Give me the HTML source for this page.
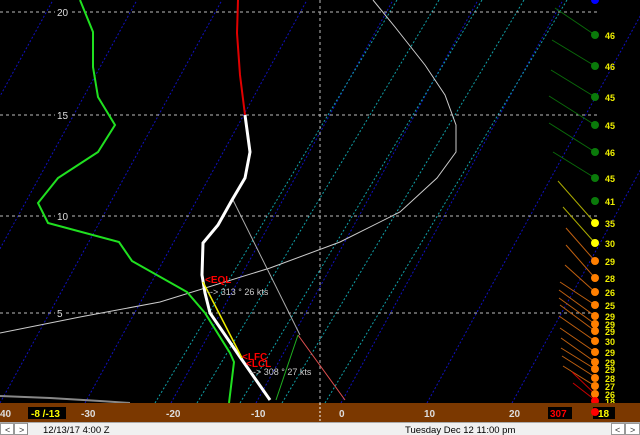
<!DOCTYPE html>
<html><head><style>
html,body{margin:0;padding:0;background:#000;width:640px;height:435px;overflow:hidden;font-family:"Liberation Sans",sans-serif}
</style></head><body>
<svg width="640" height="435" xmlns="http://www.w3.org/2000/svg" style="position:absolute;left:0;top:0">
<rect width="640" height="435" fill="#000"/>
<g stroke="#1010c0" stroke-width="1" stroke-dasharray="2,2" fill="none">
<line x1="-169" y1="403" x2="53" y2="0"/>
<line x1="-85" y1="403" x2="137" y2="0"/>
<line x1="0" y1="403" x2="222" y2="0"/>
<line x1="85" y1="403" x2="307" y2="0"/>
<line x1="171" y1="403" x2="393" y2="0"/>
<line x1="256" y1="403" x2="478" y2="0"/>
<line x1="341" y1="403" x2="563" y2="0"/>
<line x1="427" y1="403" x2="649" y2="0"/>
<line x1="512" y1="403" x2="734" y2="0"/>
</g>
<g stroke="#10a0a8" stroke-width="1" stroke-dasharray="2,2" fill="none">
<line x1="155" y1="403" x2="397" y2="0"/>
<line x1="197" y1="403" x2="439" y2="0"/>
<line x1="240" y1="403" x2="482" y2="0"/>
<line x1="282" y1="403" x2="524" y2="0"/>
<line x1="325" y1="403" x2="567" y2="0"/>
</g>
<g stroke="#bbb" stroke-width="1" stroke-dasharray="3,3">
<line x1="0" y1="12" x2="600" y2="12"/>
<line x1="0" y1="115" x2="600" y2="115"/>
<line x1="0" y1="216" x2="600" y2="216"/>
<line x1="0" y1="313" x2="600" y2="313"/>
<line x1="320" y1="0" x2="320" y2="403"/>
</g>
<g fill="#ddd" font-size="10">
<rect x="55" y="6" width="14" height="12" fill="#000"/><text x="57" y="16">20</text>
<rect x="55" y="109" width="14" height="12" fill="#000"/><text x="57" y="119">15</text>
<rect x="55" y="210" width="14" height="12" fill="#000"/><text x="57" y="220">10</text>
<rect x="55" y="307" width="10" height="12" fill="#000"/><text x="57" y="317">5</text>
</g>
<polyline fill="none" stroke="#ccc" stroke-width="1" points="0,333 80,317 160,302 270,268 340,242 400,212 437,178 456,152 456,125 445,95 425,65 395,27 373,0"/>
<polyline fill="none" stroke="#aaa" stroke-width="1" points="233,200 300,335"/>
<polyline fill="none" stroke="#e05050" stroke-width="1" points="298,335 345,400"/>
<polyline fill="none" stroke="#20b020" stroke-width="1" points="298,335 276,400"/>
<polyline fill="none" stroke="#888" stroke-width="2" points="0,396 50,398 100,401 130,403"/>
<polyline fill="none" stroke="#20e020" stroke-width="2" points="80,0 93,32 93,67 98,97 115,125 98,152 58,178 38,203 48,223 119,242 132,261 187,292 205,313 230,353 234,362 229,403"/>
<polyline fill="none" stroke="#e00000" stroke-width="2" points="238,0 237,33 240,75 245,115"/>
<polyline fill="none" stroke="#fff" stroke-width="3" points="245,115 250,152 245,178 232,200 218,225 203,243 202,275 205,293 210,313 240,357 270,400"/>
<polyline fill="none" stroke="#ee0" stroke-width="1.5" points="203,282 242,358"/>
<g fill="#f00" font-size="10" font-weight="bold">
<text x="205" y="283">&lt;EQL</text>
<text x="242" y="360">&lt;LFC</text>
<text x="246" y="367">&lt;LCL</text>
</g>
<g fill="#ccc" font-size="9">
<text x="207" y="295">--&gt;  313 ° 26 kts</text>
<text x="250" y="375">--&gt;  308 ° 27 kts</text>
</g>
<g stroke-width="1" fill="none">
<line x1="555" y1="8" x2="595" y2="35" stroke="#0a6a0a"/>
<line x1="552" y1="40" x2="595" y2="66" stroke="#0a6a0a"/>
<line x1="551" y1="70" x2="595" y2="97" stroke="#0a6a0a"/>
<line x1="549" y1="96" x2="595" y2="125" stroke="#0a6a0a"/>
<line x1="549" y1="123" x2="595" y2="152" stroke="#0a6a0a"/>
<line x1="553" y1="152" x2="595" y2="178" stroke="#0a6a0a"/>
<line x1="558" y1="181" x2="595" y2="223" stroke="#aaaa00"/>
<line x1="563" y1="207" x2="595" y2="243" stroke="#aaaa00"/>
<g stroke="#c06010">
<line x1="566" y1="228" x2="595" y2="261"/>
<line x1="566" y1="245" x2="595" y2="278"/>
<line x1="565" y1="265" x2="595" y2="292"/>
<line x1="560" y1="282" x2="595" y2="305"/>
<line x1="559" y1="290" x2="595" y2="316"/>
<line x1="559" y1="298" x2="595" y2="324"/>
<line x1="560" y1="305" x2="595" y2="331"/>
<line x1="559" y1="316" x2="595" y2="341"/>
<line x1="560" y1="328" x2="595" y2="352"/>
<line x1="561" y1="338" x2="595" y2="362"/>
<line x1="561" y1="348" x2="595" y2="369"/>
<line x1="562" y1="356" x2="595" y2="377"/>
<line x1="563" y1="366" x2="595" y2="386"/>
</g>
<line x1="572" y1="372" x2="595" y2="394" stroke="#c00"/>
<line x1="573" y1="383" x2="595" y2="400" stroke="#c00"/>
</g>
<circle cx="595" cy="0" r="4" fill="#00f"/>
<g fill="#0a7a0a"><circle cx="595" cy="35" r="4"/><circle cx="595" cy="66" r="4"/><circle cx="595" cy="97" r="4"/><circle cx="595" cy="125" r="4"/><circle cx="595" cy="152" r="4"/><circle cx="595" cy="178" r="4"/><circle cx="595" cy="201" r="4"/></g>
<g fill="#ff0"><circle cx="595" cy="223" r="4"/><circle cx="595" cy="243" r="4"/></g>
<g fill="#ff7f00"><circle cx="595" cy="261" r="4"/><circle cx="595" cy="278" r="4"/><circle cx="595" cy="292" r="4"/><circle cx="595" cy="305" r="4"/><circle cx="595" cy="316" r="4"/><circle cx="595" cy="324" r="4"/><circle cx="595" cy="331" r="4"/><circle cx="595" cy="341" r="4"/><circle cx="595" cy="352" r="4"/><circle cx="595" cy="362" r="4"/><circle cx="595" cy="369" r="4"/><circle cx="595" cy="378" r="4"/><circle cx="595" cy="386" r="4"/><circle cx="595" cy="394" r="4"/></g>
<circle cx="595" cy="401" r="4" fill="#f00"/>
<g fill="#ee0" font-size="9" font-weight="bold">
<text x="605" y="39">46</text><text x="605" y="70">46</text><text x="605" y="101">45</text><text x="605" y="129">45</text><text x="605" y="156">46</text><text x="605" y="182">45</text><text x="605" y="205">41</text><text x="605" y="227">35</text><text x="605" y="247">30</text><text x="605" y="265">29</text><text x="605" y="282">28</text><text x="605" y="296">26</text><text x="605" y="309">25</text><text x="605" y="320">29</text><text x="605" y="328">29</text><text x="605" y="335">29</text><text x="605" y="345">30</text><text x="605" y="356">29</text><text x="605" y="366">29</text><text x="605" y="373">29</text><text x="605" y="382">28</text><text x="605" y="390">27</text><text x="605" y="398">26</text><text x="605" y="405">18</text>
</g>
<rect x="0" y="403" width="640" height="19" fill="#7b3800"/>
<g fill="#ddd" font-size="10" font-weight="bold">
<text x="0" y="417">40</text><text x="81" y="417">-30</text><text x="166" y="417">-20</text><text x="251" y="417">-10</text><text x="339" y="417">0</text><text x="424" y="417">10</text><text x="509" y="417">20</text>
</g>
<rect x="28" y="407" width="38" height="12" fill="#000"/>
<text x="31" y="417" fill="#ff0" font-size="10" font-weight="bold">-8 /-13</text>
<rect x="548" y="407" width="24" height="12" fill="#000"/>
<text x="550" y="417" fill="#f00" font-size="10" font-weight="bold">307</text>
<rect x="593" y="407" width="22" height="12" fill="#000"/>
<text x="598" y="417" fill="#ff0" font-size="10" font-weight="bold">18</text>
<circle cx="595" cy="412" r="4" fill="#f00"/>
<line x1="320" y1="403" x2="320" y2="422" stroke="#fff" stroke-dasharray="2,2"/>
<rect x="0" y="422" width="640" height="13" fill="#f0f0f0"/>
<line x1="0" y1="422.5" x2="640" y2="422.5" stroke="#aaa"/>
<g stroke="#999" fill="#fff"><rect x="0.5" y="423.5" width="13" height="11"/><rect x="14.5" y="423.5" width="13" height="11"/><rect x="611.5" y="423.5" width="13" height="11"/><rect x="625.5" y="423.5" width="14" height="11"/></g>
<g fill="#333" font-size="9"><text x="5" y="433">&lt;</text><text x="19" y="433">&gt;</text><text x="615" y="433">&lt;</text><text x="630" y="433">&gt;</text></g>
<line x1="27.5" y1="423" x2="27.5" y2="435" stroke="#888"/>
<g fill="#000" font-size="9.5"><text x="43" y="433">12/13/17    4:00 Z</text><text x="405" y="433">Tuesday   Dec 12  11:00 pm</text></g>
</svg>
</body></html>
